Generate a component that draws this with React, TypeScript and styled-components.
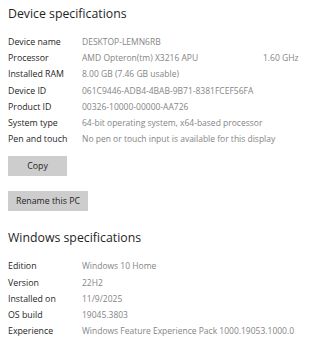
import React from "react";
import styled, { createGlobalStyle } from "styled-components";

const Global = createGlobalStyle`
  html, body { margin: 0; padding: 0; background: #ffffff; }
  body { font-family: "Open Sans", "Noto Sans", Arial, sans-serif; color: #1f1f1f; }
`;

const Page = styled.div`
  width: 320px;
  height: 344px;
  box-sizing: border-box;
  padding: 5px 0 0 8px;
  overflow: hidden;
`;

const Title = styled.h2<{ $top: number }>`
  margin: ${(p) => p.$top}px 0 0 0;
  font-size: 12.3px;
  font-weight: 400;
  line-height: 18px;
  color: #1f1f1f;
`;

const SpecList = styled.div<{ $top: number }>`
  margin-top: ${(p) => p.$top}px;
  display: grid;
  grid-template-columns: 74px 1fr;
  grid-auto-rows: 16.2px;
  align-items: center;
  line-height: 16px;
`;

const Label = styled.div`
  color: #262626;
  font-size: 8.8px;
  white-space: nowrap;
`;

const Value = styled.div`
  color: #858585;
  font-size: 8.5px;
  white-space: nowrap;
  display: flex;
`;

const ValueMain = styled.span<{ $w?: number }>`
  width: ${(p) => (p.$w ? `${p.$w}px` : "auto")};
`;

const Button = styled.button<{ $w: number; $top: number }>`
  display: block;
  width: ${(p) => p.$w}px;
  height: 20px;
  margin-top: ${(p) => p.$top}px;
  border: none;
  padding: 0;
  background: #cdcdcd;
  color: #1f1f1f;
  font-family: inherit;
  font-size: 8.8px;
`;

type Row = { label: string; value: string; extra?: string };

const device: Row[] = [
  { label: "Device name", value: "DESKTOP-LEMN6RB" },
  { label: "Processor", value: "AMD Opteron(tm) X3216 APU", extra: "1.60 GHz" },
  { label: "Installed RAM", value: "8.00 GB (7.46 GB usable)" },
  { label: "Device ID", value: "061C9446-ADB4-4BAB-9B71-8381FCEF56FA" },
  { label: "Product ID", value: "00326-10000-00000-AA726" },
  { label: "System type", value: "64-bit operating system, x64-based processor" },
  { label: "Pen and touch", value: "No pen or touch input is available for this display" },
];

const windows: Row[] = [
  { label: "Edition", value: "Windows 10 Home" },
  { label: "Version", value: "22H2" },
  { label: "Installed on", value: "11/9/2025" },
  { label: "OS build", value: "19045.3803" },
  { label: "Experience", value: "Windows Feature Experience Pack 1000.19053.1000.0" },
];

function Specs({ rows, top }: { rows: Row[]; top: number }) {
  return (
    <SpecList $top={top}>
      {rows.map((r) => (
        <React.Fragment key={r.label}>
          <Label>{r.label}</Label>
          <Value>
            <ValueMain $w={r.extra ? 181 : undefined}>{r.value}</ValueMain>
            {r.extra && <span>{r.extra}</span>}
          </Value>
        </React.Fragment>
      ))}
    </SpecList>
  );
}

export default function App() {
  return (
    <>
      <Global />
      <Page>
        <Title $top={0}>Device specifications</Title>
        <Specs rows={device} top={11} />
        <Button $w={59} $top={9}>Copy</Button>
        <Button $w={80} $top={15}>Rename this PC</Button>
        <Title $top={18}>Windows specifications</Title>
        <Specs rows={windows} top={11} />
      </Page>
    </>
  );
}
